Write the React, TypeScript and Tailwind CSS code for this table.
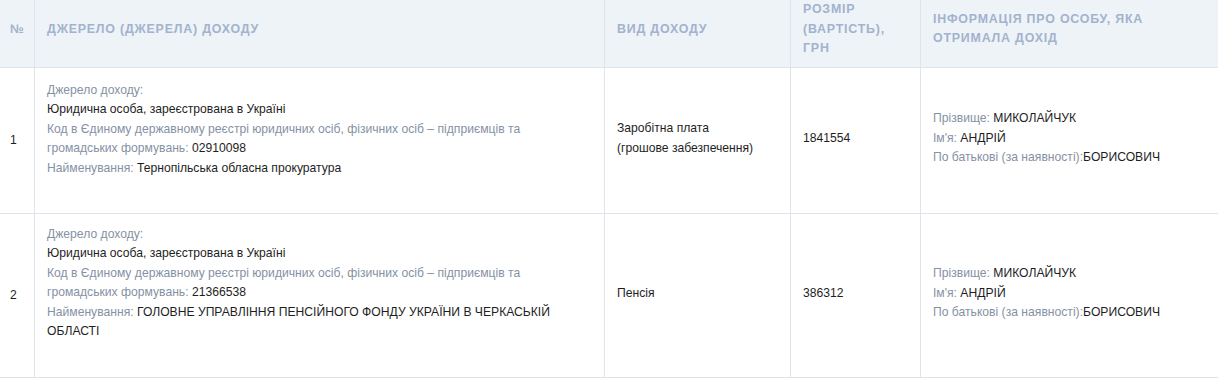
const ROWS = [
  {
    n: '1',
    code: '02910098',
    name: 'Тернопільська обласна прокуратура',
    kind: ['Заробітна плата', '(грошове забезпечення)'],
    amount: '1841554',
    height: 'h-[146px]',
    pad: 'pt-[13px]',
  },
  {
    n: '2',
    code: '21366538',
    name: 'ГОЛОВНЕ УПРАВЛІННЯ ПЕНСІЙНОГО ФОНДУ УКРАЇНИ В ЧЕРКАСЬКІЙ ОБЛАСТІ',
    kind: ['Пенсія'],
    amount: '386312',
    height: 'h-[164px]',
    pad: 'pt-[11px]',
  },
]

const grid = 'grid grid-cols-[35px_570px_186px_130px_1fr] border-b border-[#dfe3ea]'
const cell = 'border-r border-[#dfe3ea]'
const label = 'text-[#8591a4]'

export default function App() {
  return (
    <div className="w-[1218px] bg-white font-['Liberation_Sans',Arial,sans-serif] text-[12.15px] text-[#1e1e1e]">
      <div className={`${grid} h-[68px] bg-[#eef3f8] text-[12.4px] font-bold uppercase tracking-[0.8px] leading-[19.5px] text-[#a3b2ce]`}>
        <div className={`${cell} flex items-center pb-4 pl-[10px] tracking-normal`}>№</div>
        <div className={`${cell} flex items-center pb-4 px-3`}>Джерело (джерела) доходу</div>
        <div className={`${cell} flex items-center pb-4 px-3`}>Вид доходу</div>
        <div className={`${cell} flex items-center pb-4 px-3`}>
          <span className="max-w-[100px]">Розмір (вартість), грн</span>
        </div>
        <div className="flex items-center pb-4 px-3">
          <span className="max-w-[240px]">Інформація про особу, яка отримала дохід</span>
        </div>
      </div>

      {ROWS.map((row) => (
        <div key={row.n} className={`${grid} ${row.height} leading-[19.4px]`}>
          <div className={`${cell} flex items-center pl-[10px]`}>{row.n}</div>
          <div className={`${cell} ${row.pad} px-3`}>
            <p className={label}>Джерело доходу:</p>
            <p>Юридична особа, зареєстрована в Україні</p>
            <p className="pr-4">
              <span className={label}>
                Код в Єдиному державному реєстрі юридичних осіб, фізичних осіб – підприємців та громадських формувань:
              </span>{' '}
              {row.code}
            </p>
            <p className="pr-4">
              <span className={label}>Найменування:</span> {row.name}
            </p>
          </div>
          <div className={`${cell} flex flex-col justify-center pb-1 px-3`}>
            {row.kind.map((k) => (
              <p key={k}>{k}</p>
            ))}
          </div>
          <div className={`${cell} flex items-center pb-1 px-3`}>{row.amount}</div>
          <div className="flex flex-col justify-center pb-1 px-3">
            <p>
              <span className={label}>Прізвище:</span> МИКОЛАЙЧУК
            </p>
            <p>
              <span className={label}>Ім'я:</span> АНДРІЙ
            </p>
            <p>
              <span className={label}>По батькові (за наявності):</span>БОРИСОВИЧ
            </p>
          </div>
        </div>
      ))}
    </div>
  )
}
